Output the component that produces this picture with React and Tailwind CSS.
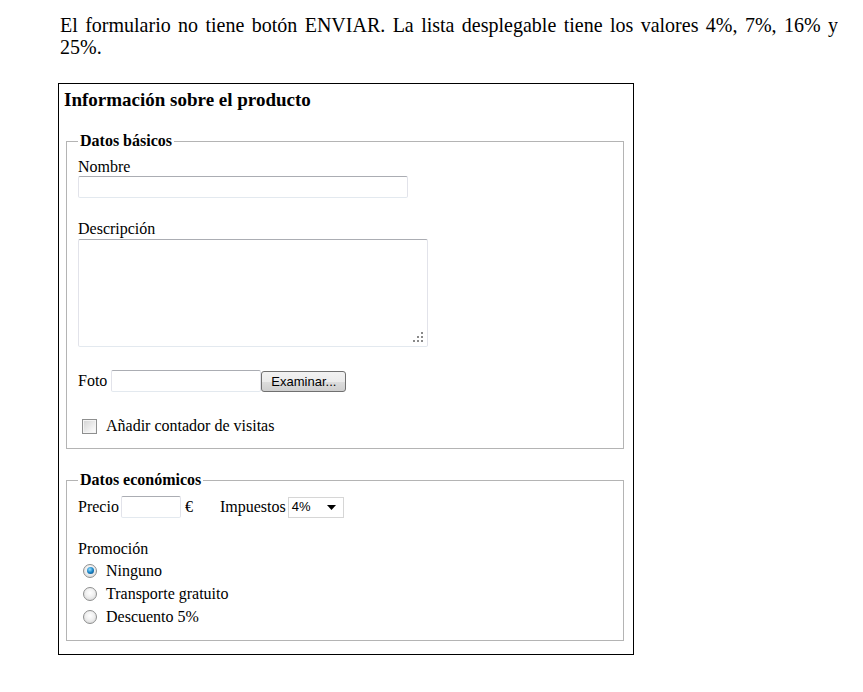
export default function App() {
  const inputCls =
    "block h-[22px] bg-white border border-[#e2e3ea] border-t-[#abadb3] border-b-[#e3e9ef] rounded-[2px]";
  const Radio = ({ checked }) => (
    <span className="relative inline-block w-[14px] h-[14px] rounded-full border border-[#8e8f8f] bg-[radial-gradient(circle_at_50%_40%,#ffffff_0%,#f0f0f0_45%,#cfcfcf_100%)] shrink-0">
      {checked && (
        <span className="absolute left-[2.5px] top-[2.5px] w-[7px] h-[7px] rounded-full bg-[radial-gradient(circle_at_40%_35%,#9be0ff_0%,#1a86c8_50%,#0b3a6b_100%)]" />
      )}
    </span>
  );
  return (
    <div className="font-['Liberation_Serif',serif] text-black bg-white min-h-[692px] pl-[58px]">
      <p className="w-[778px] ml-[2px] pt-[12px] text-[20px] leading-[20px] text-justify origin-top scale-y-[1.1]">
        El formulario no tiene botón ENVIAR. La lista desplegable tiene los valores 4%, 7%, 16% y 25%.
      </p>
      <div className="mt-[31px] w-[576px] border border-black pl-[5px] pt-[5px] pb-[13px]">
        <h3 className="text-[19px] leading-[22px] font-bold">Información sobre el producto</h3>

        <fieldset className="mt-[21px] ml-[2px] w-[558px] border border-[#b4b4b4] pl-[11px] pb-[13px] text-[16px] leading-[18px]">
          <legend className="px-[2px] font-bold leading-[18px]">Datos básicos</legend>
          <div className="pt-[8px]">Nombre</div>
          <input className={inputCls + " w-[330px]"} />
          <div className="mt-[22px]">Descripción</div>
          <div className={"relative mt-[1px] w-[350px] h-[108px] " + inputCls.replace("h-[22px]", "")}>
            <svg className="absolute right-[4px] bottom-[4px]" width="10" height="10" viewBox="0 0 10 10">
              <g fill="#8a8a8a">
                <rect x="8" y="0" width="2" height="2" />
                <rect x="8" y="4" width="2" height="2" />
                <rect x="4" y="4" width="2" height="2" />
                <rect x="8" y="8" width="2" height="2" />
                <rect x="4" y="8" width="2" height="2" />
                <rect x="0" y="8" width="2" height="2" />
              </g>
            </svg>
          </div>
          <div className="mt-[23px] flex items-center h-[22px]">
            <span>Foto</span>
            <input className={inputCls + " ml-[4px] w-[150px]"} />
            <span className="ml-[0px] h-[21px] w-[85px] flex items-center justify-center rounded-[3px] border border-[#707070] bg-[linear-gradient(#f2f2f2,#ebebeb_50%,#dddddd_51%,#cfcfcf)] font-['Liberation_Sans',sans-serif] text-[13px] leading-none">
              Examinar...
            </span>
          </div>
          <div className="mt-[25px] flex items-center h-[18px]">
            <span className="ml-[4px] w-[15px] h-[15px] border border-[#8e8f8f] bg-[linear-gradient(135deg,#d2d2d2,#eeeeee_60%,#ffffff)] shadow-[inset_0_0_0_1px_#f4f4f4]" />
            <span className="ml-[9px]">Añadir contador de visitas</span>
          </div>
        </fieldset>

        <fieldset className="mt-[22px] ml-[2px] w-[558px] border border-[#b4b4b4] pl-[11px] pb-[12px] text-[16px] leading-[18px]">
          <legend className="px-[2px] font-bold leading-[18px]">Datos económicos</legend>
          <div className="pt-[7px] flex items-center h-[29px]">
            <span>Precio</span>
            <input className={inputCls + " ml-[2px] w-[60px]"} />
            <span className="ml-[4px]">€</span>
            <span className="ml-[27px]">Impuestos</span>
            <span className="ml-[2px] h-[21px] w-[56px] flex items-center justify-between border border-[#d6d6d6] bg-white pl-[3px] pr-[7px] font-['Liberation_Sans',sans-serif] text-[13px]">
              <span>4%</span>
              <svg width="9" height="5" viewBox="0 0 9 5">
                <path d="M0 0H9L4.5 5Z" fill="#000" />
              </svg>
            </span>
          </div>
          <div className="mt-[22px]">Promoción</div>
          <div className="mt-[1px] flex flex-col">
            {[
              ["Ninguno", true],
              ["Transporte gratuito", false],
              ["Descuento 5%", false],
            ].map(([t, c]) => (
              <div key={t} className="flex items-center h-[23px] pl-[5px]">
                <Radio checked={c} />
                <span className="ml-[9px]">{t}</span>
              </div>
            ))}
          </div>
        </fieldset>
      </div>
    </div>
  );
}
